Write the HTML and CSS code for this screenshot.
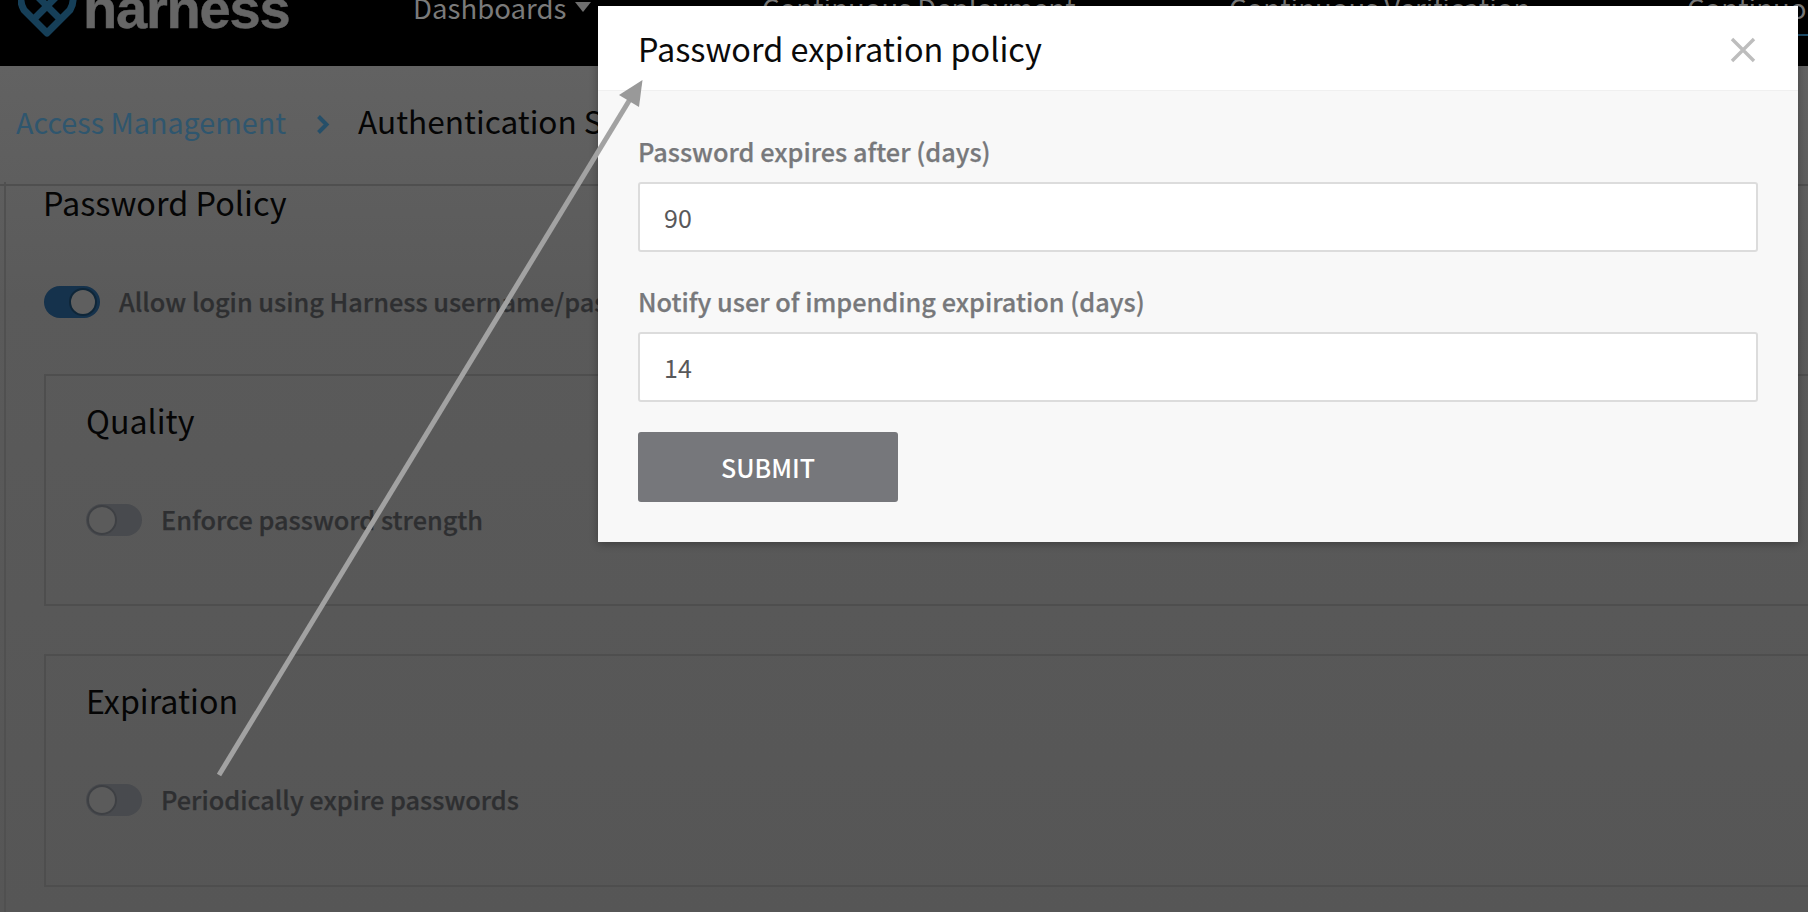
FILE: index.html
```html
<!DOCTYPE html>
<html lang="en">
<head>
<meta charset="utf-8">
<title>Password expiration policy</title>
<link rel="stylesheet" href="styles.css">
</head>
<body>
<div class="page">
  <header class="navbar">
    <div class="logo">
      <svg class="logo-mark" width="60" height="40" viewBox="0 0 60 40">
        <path d="M4 -6 Q1 1 6 10 L29 33 L52 10 Q57 1 54 -6" fill="none" stroke="#163f58" stroke-width="7" stroke-linejoin="round"/>
        <path d="M15.5 19.5 L45 -10 M42.5 19.5 L13 -10" fill="none" stroke="#163f58" stroke-width="7"/>
      </svg>
      <span class="logo-text">harness</span>
    </div>
    <nav class="nav">
      <span class="nav-item dashboards">Dashboards<i class="caret"></i></span>
      <span class="nav-item cd">Continuous Deployment</span>
      <span class="nav-item cv">Continuous Verification</span>
      <span class="nav-item ce">Continuous Efficiency</span>
    </nav>
    <div class="nav-underline"></div>
  </header>
  <div class="crumbs">
    <a class="crumb-link">Access Management</a>
    <svg class="crumb-chev" width="14" height="21" viewBox="0 0 14 21"><path d="M2.5 2.5 L10.5 10.5 L2.5 18.5" fill="none" stroke="#264f69" stroke-width="4"/></svg>
    <span class="crumb-current">Authentication Settings</span>
  </div>
  <section class="panel">
    <h2 class="panel-title">Password Policy</h2>
    <div class="row top-row">
      <span class="toggle on"><i class="knob"></i></span>
      <span class="row-label">Allow login using Harness username/password</span>
    </div>
    <div class="box first">
      <h3 class="box-title">Quality</h3>
      <div class="row">
        <span class="toggle"><i class="knob"></i></span>
        <span class="row-label">Enforce password strength</span>
      </div>
    </div>
    <div class="box">
      <h3 class="box-title">Expiration</h3>
      <div class="row">
        <span class="toggle"><i class="knob"></i></span>
        <span class="row-label">Periodically expire passwords</span>
      </div>
    </div>
  </section>

  <div class="modal">
    <div class="modal-head">
      <span class="modal-title">Password expiration policy</span>
      <svg class="close" width="26" height="26" viewBox="0 0 26 26"><path d="M2 2 L24 24 M24 2 L2 24" stroke="#bdbdbd" stroke-width="3.4" fill="none"/></svg>
    </div>
    <form class="modal-body">
      <label class="field-label">Password expires after (days)</label>
      <div class="input">90</div>
      <label class="field-label second">Notify user of impending expiration (days)</label>
      <div class="input">14</div>
      <div class="submit">SUBMIT</div>
    </form>
  </div>

  <svg class="arrow" width="1808" height="912" viewBox="0 0 1808 912">
    <line x1="219" y1="775" x2="632" y2="96" stroke="#a2a2a2" stroke-width="5"/>
    <path d="M642.5 80 L619 95 L639 107 Z" fill="#999"/>
  </svg>
</div>
</body>
</html>
```
FILE: styles.css
```css
* { box-sizing: border-box; }
html, body { margin: 0; padding: 0; }
body { font-family: "Noto Sans CJK SC", "Noto Sans", sans-serif; }
.page {
  position: relative;
  width: 1808px;
  height: 912px;
  overflow: hidden;
  background: linear-gradient(#626262 66px, #5a5a5a 300px, #565656 912px);
}
.navbar {
  position: relative;
  height: 66px;
  background: #000;
  display: flex;
  align-items: flex-start;
  overflow: hidden;
}
.logo { display: flex; margin-left: 18px; }
.logo-mark { flex: none; }
.logo-text {
  margin-left: 5px;
  margin-top: -24px;
  font-family: "Liberation Sans", sans-serif;
  font-weight: 700;
  font-size: 56px;
  line-height: 66px;
  letter-spacing: -1.2px;
  -webkit-text-stroke: .5px #666;
  color: #666;
}
.nav { display: flex; margin-top: -11px; position: absolute; left: 0; top: 0; }
.nav-item { font-size: 27.6px; line-height: 36px; color: #7a7a7a; white-space: nowrap; position: absolute; top: 0; }
.dashboards { left: 413px; }
.cd { left: 762px; }
.cv { left: 1229px; }
.ce { left: 1687px; }
.caret {
  display: inline-block;
  margin-left: 9px;
  vertical-align: 7px;
  border-left: 8px solid transparent;
  border-right: 8px solid transparent;
  border-top: 10px solid #6e6e6e;
}
.nav-underline { position: absolute; left: 1797px; top: 34px; width: 11px; height: 2px; background: #1d4c68; }

.crumbs {
  height: 120px;
  display: flex;
  align-items: center;
  padding-left: 16px;
  padding-bottom: 6px;
  border-bottom: 2px solid #4f4f4f;
  white-space: nowrap;
}
.crumb-link { font-size: 28.7px; color: #2f566e; margin-top: -1px; }
.crumb-chev { margin-left: 30px; margin-top: 4px; }
.crumb-current { margin-left: 28px; margin-top: -4px; font-size: 31.6px; color: #050505; }

.panel {
  margin-left: 4px;
  width: 1900px;
  height: 800px;
  border-left: 2px solid #505050;
  padding: 0 0 0 38px;
}
.panel-title { margin: -4px 0 0 -1px; font-weight: 400; font-size: 32.4px; line-height: 40px; color: #050505; }
.row { display: flex; align-items: center; height: 32px; }
.top-row { margin-top: 64px; }
.toggle {
  width: 56px;
  height: 32px;
  border-radius: 16px;
  background: #484a4e;
  display: flex;
  align-items: center;
  flex: none;
  padding: 0 1px;
}
.toggle.on { background: #15324c; justify-content: flex-end; padding: 0 3px; }
.knob {
  width: 30px;
  height: 30px;
  border-radius: 50%;
  background: #5b5b5b;
  border: 2px solid #3e4044;
}
.toggle.on .knob { width: 28px; height: 28px; background: #5f5f5f; border-color: #0f2638; }
.row-label { margin-left: 19px; padding-bottom: 2px; font-size: 25.3px; font-weight: 500; -webkit-text-stroke: .25px #2e2f31; color: #2e2f31; white-space: nowrap; }
.box {
  width: 1900px;
  height: 233px;
  border: 2px solid #4e4e4e;
  padding: 21px 0 0 40px;
  margin-top: 48px;
}
.box.first { margin-top: 56px; height: 232px; }
.box-title { margin: 0 0 61px; font-weight: 400; font-size: 32.2px; line-height: 46px; color: #050505; }

.modal {
  position: absolute;
  left: 598px;
  top: 6px;
  width: 1200px;
  height: 536px;
  background: #f8f8f8;
  box-shadow: 0 2px 8px rgba(0, 0, 0, .3);
}
.modal-head {
  height: 85px;
  background: #fff;
  border-bottom: 1px solid #f0f0f0;
  display: flex;
  align-items: center;
  justify-content: space-between;
  padding: 0 42px 0 40px;
}
.modal-title { font-size: 32.4px; color: #0a0a0a; margin-top: -2px; }
.close { margin-top: 4px; }
.modal-body { padding: 42px 40px 0; display: flex; flex-direction: column; align-items: flex-start; }
.field-label { font-size: 25.3px; line-height: 36px; font-weight: 500; -webkit-text-stroke: .25px #77787b; color: #77787b; }
.field-label.second { margin-top: 31px; }
.input {
  margin-top: 13px;
  width: 1120px;
  height: 70px;
  background: #fff;
  border: 2px solid #dcdcdc;
  border-radius: 3px;
  padding-left: 24px;
  font-size: 25px;
  line-height: 66px;
  color: #58585a;
}
.submit {
  margin-top: 30px;
  width: 260px;
  height: 70px;
  background: #76777b;
  border-radius: 3px;
  color: #fff;
  font-size: 25px;
  font-weight: 500;
  line-height: 70px;
  text-align: center;
}
.arrow { position: absolute; left: 0; top: 0; pointer-events: none; }
```
